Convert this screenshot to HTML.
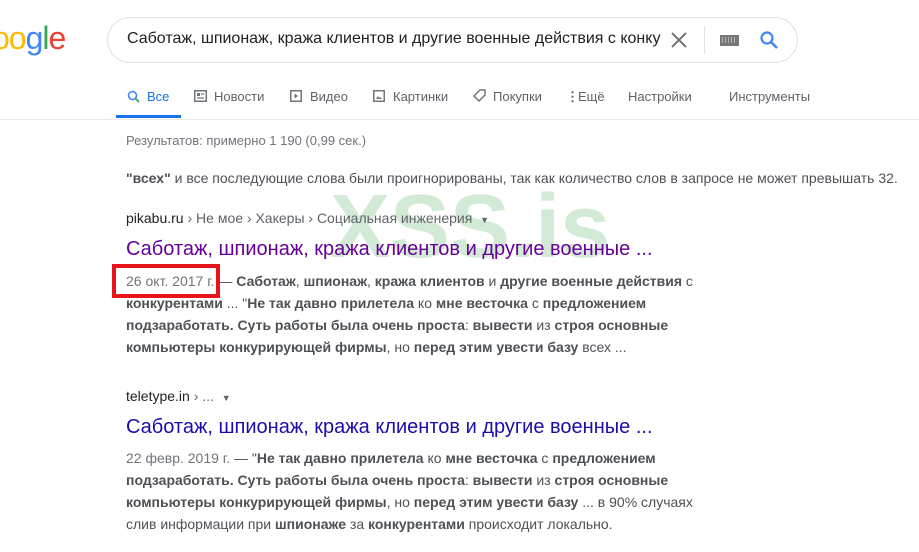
<!DOCTYPE html>
<html><head><meta charset="utf-8"><style>
body{margin:0;width:919px;height:552px;background:#fff;position:relative;overflow:hidden;font-family:"Liberation Sans",Arial,sans-serif;}
.a{position:absolute;white-space:nowrap;}
.tab{position:absolute;top:89px;font-size:13px;color:#5f6368;}
.s{font-size:14px;color:#4d5156;line-height:22px;}
.s b{color:#4d5156;}
</style></head><body>
<div class="a" style="left:-8px;top:20px;font-size:32px;letter-spacing:-1px;font-family:'Liberation Sans',sans-serif;"><span style="color:#fbbc05">o</span><span style="color:#fbbc05">o</span><span style="color:#4285f4">g</span><span style="color:#34a853">l</span><span style="color:#ea4335">e</span></div>
<div class="a" style="left:107px;top:17px;width:689px;height:44px;border:1px solid #dfe1e5;border-radius:23px;"></div>
<div class="a" style="left:127px;top:30px;font-size:16px;color:#202124;">Саботаж, шпионаж, кража клиентов и другие военные действия с конку</div>
<svg class="a" style="left:670px;top:31px" width="18" height="18"><path d="M2 2L16 16M16 2L2 16" stroke="#70757a" stroke-width="2"/></svg>
<div class="a" style="left:704px;top:26px;width:1px;height:28px;background:#dfe1e5"></div>
<div class="a" style="left:720px;top:35px;width:19px;height:11px;background:#777;"></div>
<div class="a" style="left:722px;top:37px;width:15px;height:6px;background:repeating-linear-gradient(90deg,#ddd 0 1px,#777 1px 3px);opacity:.6"></div>
<svg class="a" style="left:759px;top:30px" width="20" height="20"><circle cx="8" cy="8" r="5.5" fill="none" stroke="#4285f4" stroke-width="2.2"/><path d="M12 12L18 18" stroke="#4285f4" stroke-width="2.6"/></svg>
<svg class="a" style="left:127px;top:90px" width="13" height="13"><circle cx="5.5" cy="5.5" r="4" fill="none" stroke="#4285f4" stroke-width="1.6"/><path d="M8.5 8.5L12 12" stroke="#34a853" stroke-width="1.8"/></svg>
<div class="tab" style="left:147px;color:#1a73e8">Все</div>
<div class="a" style="left:116px;top:115px;width:65px;height:3px;background:#1a73e8"></div>
<svg class="a" style="left:194px;top:90px" width="13" height="12"><rect x="0.75" y="0.75" width="11.5" height="10.5" fill="none" stroke="#70757a" stroke-width="1.5"/><rect x="3" y="3" width="3" height="3" fill="#70757a"/><path d="M7 4H10M3 8H10" stroke="#70757a" stroke-width="1.2"/></svg>
<div class="tab" style="left:214px">Новости</div>
<svg class="a" style="left:290px;top:90px" width="12" height="12"><rect x="0.75" y="0.75" width="10.5" height="10.5" fill="none" stroke="#70757a" stroke-width="1.5"/><path d="M4.5 3.5L8 6L4.5 8.5Z" fill="#70757a"/></svg>
<div class="tab" style="left:310px">Видео</div>
<svg class="a" style="left:373px;top:90px" width="12" height="12"><rect x="0.75" y="0.75" width="10.5" height="10.5" fill="none" stroke="#70757a" stroke-width="1.5"/><path d="M3 9L5 6L6.5 8L7.5 7L9 9Z" fill="#70757a"/></svg>
<div class="tab" style="left:393px">Картинки</div>
<svg class="a" style="left:473px;top:89px" width="13" height="13"><path d="M1 7L7 1H12V6L6 12Z" fill="none" stroke="#70757a" stroke-width="1.5"/></svg>
<div class="tab" style="left:493px">Покупки</div>
<div class="tab" style="left:566px;font-weight:bold">⋮</div>
<div class="tab" style="left:578px">Ещё</div>
<div class="tab" style="left:628px">Настройки</div>
<div class="tab" style="left:729px">Инструменты</div>
<div class="a" style="left:0;top:119px;width:919px;height:1px;background:#ebebeb"></div>
<div class="a" style="left:126px;top:133px;font-size:13px;color:#70757a">Результатов: примерно 1 190 (0,99 сек.)</div>
<div class="a" style="left:126px;top:170px;font-size:14px;color:#4d5156"><b>"всех"</b> и все последующие слова были проигнорированы, так как количество слов в запросе не может превышать 32.</div>
<div class="a" style="left:330px;top:176px;font-size:90px;font-weight:bold;color:rgba(110,190,120,.3);letter-spacing:0px">XSS.is</div>
<div class="a" style="left:126px;top:210px;font-size:14px;color:#202124">pikabu.ru <span style="color:#5f6368">› Не мое › Хакеры › Социальная инженерия &nbsp;<span style="font-size:9px">▼</span></span></div>
<div class="a" style="left:126px;top:238px;font-size:20px;color:#660099">Саботаж, шпионаж, кража клиентов и другие военные ...</div>
<div class="a s" style="left:126px;top:270px"><span style="color:#70757a">26 окт. 2017 г.</span> — <b>Саботаж</b>, <b>шпионаж</b>, <b>кража клиентов</b> и <b>другие военные действия</b> с<br><b>конкурентами</b> ... "<b>Не так давно прилетела</b> ко <b>мне весточка</b> с <b>предложением</b><br><b>подзаработать. Суть работы была очень проста</b>: <b>вывести</b> из <b>строя основные</b><br><b>компьютеры конкурирующей фирмы</b>, но <b>перед этим увести базу</b> всех ...</div>
<div class="a" style="left:112px;top:264px;width:100px;height:26px;border:4px solid #e8141c"></div>
<div class="a" style="left:126px;top:388px;font-size:14px;color:#202124">teletype.in <span style="color:#5f6368">› ... &nbsp;<span style="font-size:9px">▼</span></span></div>
<div class="a" style="left:126px;top:416px;font-size:20px;color:#1a0dab">Саботаж, шпионаж, кража клиентов и другие военные ...</div>
<div class="a s" style="left:126px;top:447px"><span style="color:#70757a">22 февр. 2019 г.</span> — "<b>Не так давно прилетела</b> ко <b>мне весточка</b> с <b>предложением</b><br><b>подзаработать. Суть работы была очень проста</b>: <b>вывести</b> из <b>строя основные</b><br><b>компьютеры конкурирующей фирмы</b>, но <b>перед этим увести базу</b> ... в 90% случаях<br>слив информации при <b>шпионаже</b> за <b>конкурентами</b> происходит локально.</div>
</body></html>
